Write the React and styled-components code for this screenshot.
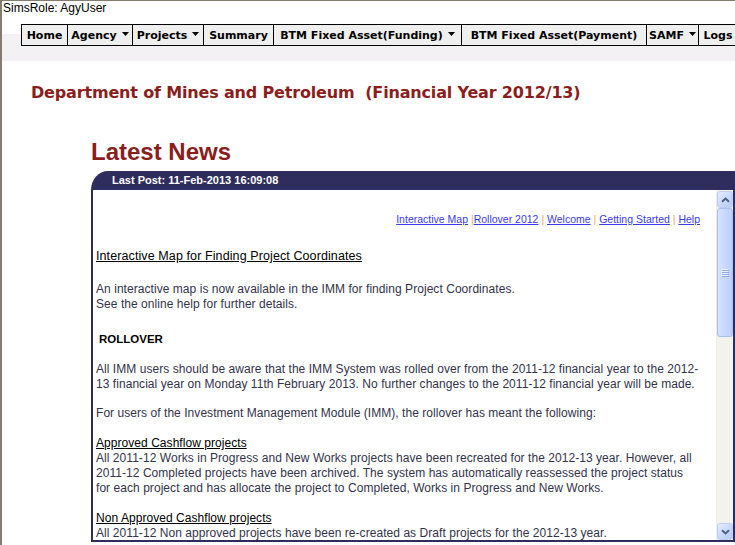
import React from 'react';
import styled, { createGlobalStyle } from 'styled-components';

const NAVY = '#2f2d5e';
const RED = '#8b1d1d';

const GlobalStyle = createGlobalStyle`
  html, body { margin: 0; padding: 0; overflow: hidden; background: #fff; }
  body {
    width: 735px;
    height: 545px;
    box-sizing: border-box;
    border-top: 1px solid #857b6e;
    border-left: 2px solid #857b6e;
    font-family: "Liberation Sans", Arial, sans-serif;
  }
`;

const Page = styled.div`
  display: flex;
  flex-direction: column;
`;

const TopBand = styled.header`
  height: 60px;
  display: flex;
  flex-direction: column;
  background: linear-gradient(#fff 0, #fff 33px, #f4f1f4 33px, #f4f1f4 100%);
`;

const RoleLine = styled.div`
  font: 12px/15px "Liberation Sans", Arial, sans-serif;
  color: #000;
  padding-left: 1px;
`;

const Nav = styled.nav`
  display: flex;
  margin: 8px 0 0 19px;
  height: 22px;
  box-sizing: border-box;
  border-top: 1px solid #000;
  border-bottom: 1px solid #000;
  border-left: 1px solid #000;
  width: max-content;
  background: #efefef;
  white-space: nowrap;
`;

const NavItem = styled.div`
  width: ${p => p.$w}px;
  flex: none;
  box-sizing: border-box;
  border-right: 1px solid #000;
  display: flex;
  align-items: center;
  justify-content: center;
  gap: 5px;
  font: bold 11px/1 "DejaVu Sans", Verdana, sans-serif;
  color: #000;
`;

const Caret = () => (
  <svg width="7" height="4" viewBox="0 0 7 4" style={{ marginTop: -2 }}>
    <path d="M0 0 H7 L3.5 4 Z" fill="#000" />
  </svg>
);

const DeptTitle = styled.h1`
  margin: 22px 0 0 29px;
  font: bold 16px/20px "DejaVu Sans", Tahoma, sans-serif;
  letter-spacing: -0.17px;
  color: ${RED};
  white-space: pre;
`;

const NewsSection = styled.section`
  margin-left: 89px;
  display: flex;
  flex-direction: column;
`;

const NewsHeading = styled.h2`
  margin: 35px 0 5px 0;
  font: bold 24px/28px "Liberation Sans", Arial, sans-serif;
  color: ${RED};
`;

const NewsHeader = styled.div`
  height: 19px;
  background: ${NAVY};
  border-top-left-radius: 17px 19px;
  padding-left: 21px;
  font: bold 11px/19px "Liberation Sans", Arial, sans-serif;
  color: #fff;
`;

const NewsBody = styled.div`
  display: flex;
  height: 352px;
  box-sizing: border-box;
  border: 2px solid ${NAVY};
  border-top: none;
  background: #fff;
`;

const Content = styled.div`
  flex: 1;
  min-width: 0;
  overflow: hidden;
  padding: 22px 4px 0 3px;
  font: 12px/15px "Liberation Sans", Arial, sans-serif;
  letter-spacing: 0.05px;
  color: #33334a;
`;

const LinksRow = styled.div`
  text-align: right;
  padding-right: 12px;
  font-size: 10.5px;
  letter-spacing: 0;
`;

const Link = styled.a`
  color: #3a3af0;
  text-decoration: underline;
  cursor: pointer;
`;

const Sep = styled.span`
  color: #e2a868;
`;

const Title = styled.div`
  margin-top: ${p => p.$gap}px;
  font-size: 12.5px;
  letter-spacing: 0.1px;
  color: #000;
  text-decoration: underline;
`;

const Para = styled.p`
  margin: ${p => p.$gap}px 0 0;
`;

const SubTitle = styled.div`
  margin-top: ${p => p.$gap}px;
  color: #000;
  text-decoration: underline;
`;

const Rollover = styled.div`
  margin-top: 20px;
  padding-left: 3px;
  font: bold 11.5px/15px "Liberation Sans", Tahoma, sans-serif;
  letter-spacing: 0;
  color: #000;
`;

const ScrollBar = styled.div`
  width: 17px;
  flex: none;
  display: flex;
  flex-direction: column;
  background: #f3f2ec;
  border-left: 1px solid #eeede6;
  box-sizing: border-box;
  padding-top: 1px;
`;

const ScrollButton = styled.div`
  height: 17px;
  flex: none;
  box-sizing: border-box;
  border: 1px solid #bccdf7;
  border-radius: 3px;
  background: linear-gradient(135deg, #e6eefe 0%, #c9d9fc 50%, #b6cbf8 100%);
  display: flex;
  align-items: center;
  justify-content: center;
  margin-top: ${p => (p.$down ? 'auto' : '0')};
`;

const Thumb = styled.div`
  height: 129px;
  flex: none;
  box-sizing: border-box;
  border: 1px solid #a8bff2;
  border-radius: 3px;
  background: linear-gradient(90deg, #d6e2fe 0%, #c8d8fd 50%, #bdd0fa 100%);
  display: flex;
  align-items: center;
  justify-content: center;
`;

const Chevron = ({ down }) => (
  <svg width="9" height="6" viewBox="0 0 9 6">
    <path
      d={down ? 'M1 1.2 L4.5 4.5 L8 1.2' : 'M1 4.8 L4.5 1.5 L8 4.8'}
      fill="none"
      stroke="#4d6185"
      strokeWidth="2"
    />
  </svg>
);

const Grip = () => (
  <svg width="8" height="8" viewBox="0 0 8 8">
    {[0, 2, 4, 6].map(y => (
      <g key={y}>
        <rect x="0" y={y} width="7" height="1" fill="#eef4fe" />
        <rect x="1" y={y + 1} width="7" height="1" fill="#8caaef" />
      </g>
    ))}
  </svg>
);

export default function App() {
  return (
    <Page>
      <GlobalStyle />
      <TopBand>
        <RoleLine>SimsRole: AgyUser</RoleLine>
        <Nav>
          <NavItem $w={46}>Home</NavItem>
          <NavItem $w={65}>Agency<Caret /></NavItem>
          <NavItem $w={71}>Projects<Caret /></NavItem>
          <NavItem $w={70}>Summary</NavItem>
          <NavItem $w={188}>BTM Fixed Asset(Funding)<Caret /></NavItem>
          <NavItem $w={185}>BTM Fixed Asset(Payment)</NavItem>
          <NavItem $w={52}>SAMF<Caret /></NavItem>
          <NavItem $w={39}>Logs</NavItem>
        </Nav>
      </TopBand>

      <DeptTitle>{'Department of Mines and Petroleum  (Financial Year 2012/13)'}</DeptTitle>

      <NewsSection>
        <NewsHeading>Latest News</NewsHeading>
        <NewsHeader>Last Post: 11-Feb-2013 16:09:08</NewsHeader>
        <NewsBody>
          <Content>
            <LinksRow>
              <Link>Interactive Map</Link> <Sep>|</Sep><Link>Rollover 2012</Link> <Sep>|</Sep>{' '}
              <Link>Welcome</Link> <Sep>|</Sep> <Link>Getting Started</Link> <Sep>|</Sep>{' '}
              <Link>Help</Link>
            </LinksRow>
            <Title $gap={22}>Interactive Map for Finding Project Coordinates</Title>
            <Para $gap={18}>
              An interactive map is now available in the IMM for finding Project Coordinates.
              <br />
              See the online help for further details.
            </Para>
            <Rollover>ROLLOVER</Rollover>
            <Para $gap={15}>
              All IMM users should be aware that the IMM System was rolled over from the 2011-12
              financial year to the 2012-
              <br />
              13 financial year on Monday 11th February 2013. No further changes to the 2011-12
              financial year will be made.
            </Para>
            <Para $gap={14}>
              For users of the Investment Management Module (IMM), the rollover has meant the
              following:
            </Para>
            <SubTitle $gap={15}>Approved Cashflow projects</SubTitle>
            <Para $gap={0}>
              All 2011-12 Works in Progress and New Works projects have been recreated for the
              2012-13 year. However, all
              <br />
              2011-12 Completed projects have been archived. The system has automatically
              reassessed the project status
              <br />
              for each project and has allocate the project to Completed, Works in Progress and New
              Works.
            </Para>
            <SubTitle $gap={15}>Non Approved Cashflow projects</SubTitle>
            <Para $gap={0}>
              All 2011-12 Non approved projects have been re-created as Draft projects for the
              2012-13 year.
            </Para>
          </Content>
          <ScrollBar>
            <ScrollButton><Chevron /></ScrollButton>
            <Thumb><Grip /></Thumb>
            <ScrollButton $down><Chevron down /></ScrollButton>
          </ScrollBar>
        </NewsBody>
      </NewsSection>
    </Page>
  );
}
